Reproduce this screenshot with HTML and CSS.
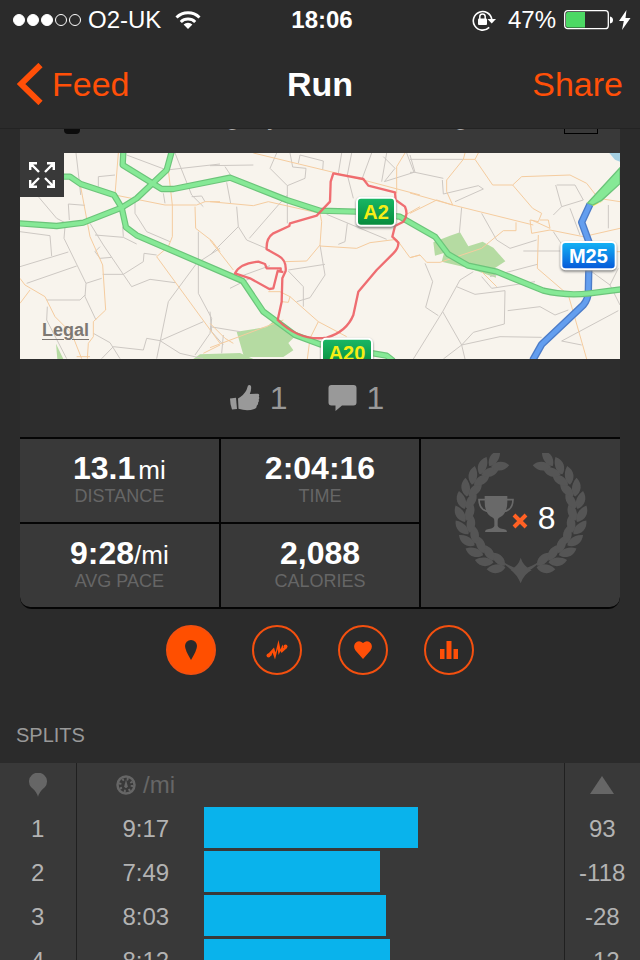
FILE: index.html
```
<!DOCTYPE html>
<html lang="en">
<head>
	<meta charset="UTF-8">
	<meta name="viewport" content="width=device-width, initial-scale=1">
	<title>Run</title>
	<link rel="stylesheet" href="styles.css">
</head>
<body>
<div class="app">
	<header class="top">
		<div class="status">
			<div class="status-left">
				<span class="dots"><i class="on"></i><i class="on"></i><i class="on"></i><i></i><i></i></span>
				<span>O2-UK</span>
				<svg class="wifi" width="26" height="20" viewBox="0 0 26 20" fill="none" stroke="#fff" stroke-width="3">
					<path d="M1.500 7.500a16.500 16.500 0 0 1 23 0"/>
					<path d="M5.800 12a10.400 10.400 0 0 1 14.400 0"/>
					<path d="M13 19l-4.400-4.400a6.300 6.300 0 0 1 8.800 0z" fill="#fff" stroke="none"/>
				</svg>
			</div>
			<b>18:06</b>
			<div class="status-right">
				<svg width="24" height="22" viewBox="0 0 24 22">
					<path d="M17.200 18.400a9.300 9.300 0 1 1 2.600-8" fill="none" stroke="#fff" stroke-width="1.600"/>
					<path d="M15.500 10H24l-4.300 4.600z" fill="#fff"/>
					<rect x="6" y="9.500" width="9" height="6.500" rx="1" fill="#fff"/>
					<path d="M7.800 10V7.600a2.700 2.700 0 0 1 5.400 0V10" fill="none" stroke="#fff" stroke-width="1.500"/>
				</svg>
				<span class="percent">47%</span>
				<svg width="50" height="20" viewBox="0 0 50 20">
					<rect x=".7" y=".7" width="43.600" height="18" rx="3" fill="none" stroke="#fff" stroke-width="1.300"/>
					<path d="M2 4q0-2 2-2h17v15.500H4q-2 0-2-2z" fill="#4cd964"/>
					<path d="M46 6.500q3 .5 3 3.500t-3 3.500z" fill="#fff"/>
				</svg>
				<svg class="bolt" width="12" height="20" viewBox="0 0 12 20"><path d="M7.500 0L0 11h4.800L3 20l8.500-12H6.500z" fill="#fff"/></svg>
			</div>
		</div>
		<nav class="nav">
			<a class="back" href="#">
				<svg width="26" height="42" viewBox="0 0 26 42"><path d="M23.500 2L4 21l19.500 19" fill="none" stroke="#ff4f08" stroke-width="6"/></svg>
				Feed
			</a>
			<h1>Run</h1>
			<button class="share" type="button">Share</button>
		</nav>
	</header>

	<main class="content">
		<article class="card">
			<div class="card-head">
				<span class="avatar"></span>
				<span class="name"><span>g</span><span>y</span></span>
				<span class="place">g</span>
				<span class="badge"></span>
			</div>

			<div class="map">
				<svg class="map-canvas" viewBox="0 0 1800 618" preserveAspectRatio="xMidYMid slice">
					<defs>
						<linearGradient id="green" x1="0" y1="0" x2="0" y2="1"><stop offset="0" stop-color="#19b865"/><stop offset="1" stop-color="#078a3c"/></linearGradient>
						<linearGradient id="blue" x1="0" y1="0" x2="0" y2="1"><stop offset="0" stop-color="#14b4f5"/><stop offset="1" stop-color="#0757d8"/></linearGradient>
					</defs>
					<rect width="1800" height="618" fill="#f8f4ed"/>
					<!-- woods and water -->
					<g fill="#b5dba2">
						<path d="M650 536L740 522 765 500 830 545 805 570 820 592 790 612 672 612z"/>
						<path d="M1240 268L1290 248 1320 238 1345 280 1388 266 1420 284 1456 325 1425 345 1428 374 1345 345 1265 326 1272 300 1245 308z"/>
						<path d="M520 618L540 604 660 600 700 618z"/>
						<path d="M108 572L130 618H112z"/>
					</g>
					<path d="M1768 0H1800V26L1785 20z" fill="#a5d0e2"/>
					<!-- lanes -->
					<g class="lane">
						<g transform="translate(-30 -99)">
							<path d="M198 99L208 185 212 225M350 105L470 150 630 132M495 99L545 225 580 260M265 200V170L315 165M178 300L175 252 225 256M85 230L140 295 165 308M30 335L120 347 125 408M30 440L175 396M50 490L200 438M165 320L162 355 228 490 225 530 258 600M240 310L280 375 365 500 420 478 495 488M255 345L340 352 380 372M270 380L255 395 270 415 305 412M278 463H340L400 425 402 400 440 405M340 350L338 320M375 240V280L410 335 480 365M460 220L465 250M565 335V520L605 595 600 640 555 705M630 385L560 430 475 545 440 716M228 490L275 475M110 540L210 540 225 525M112 560L110 600 170 716M250 640L300 668 330 716M275 716L310 680 400 690 410 655 450 662 580 605M450 662L510 700 580 716M545 230L575 228 585 245"/>
						</g>
						<g transform="translate(570 -24)">
							<path d="M0 62L130 60M45 65L65 95M50 112L62 175M200 24L180 70 232 122 285 100 288 70 248 66 240 24M232 122V235M232 150L205 180 118 280M80 185L85 245 0 330M85 245L110 285 180 315M265 55L270 30 340 48 338 75M395 24L385 85M425 24L412 90 430 160M485 24L455 105M530 24L515 110M520 35L555 70 523 110M590 24L612 82 523 110M350 208L530 283M412 235L405 290 385 298M235 375L345 358M330 300L345 390 300 458 260 470M235 378L280 425V485M75 400L180 362M120 400L60 430M0 500L5 560 40 600M0 545L90 560M40 570L35 625"/>
						</g>
						<g transform="translate(1170 -24)">
							<path d="M0 43H160M0 30L15 82 100 100M15 82H0M97 105L100 147 205 122 220 132 135 170M155 187L148 265M215 205L260 285 300 310 380 285M340 318H450M440 120H495L520 165 455 185 437 120M430 210L455 185M480 190L510 270M595 180V250M430 260L470 320M240 395L382 358M215 395L245 430 375 410M140 425L195 448 285 437 283 537 190 562 155 600 100 642M190 380L150 405 98 500 10 642M45 355L68 410 47 487 85 512M98 500L155 600 165 642M155 600L270 575 395 577M293 497L390 485 435 510 475 495M455 588L625 497M455 588L515 600M545 380L600 420 630 480M600 420L625 370"/>
						</g>
					</g>
					<g class="lane street">
						<g transform="translate(-30 -99)">
							<path d="M325 99L315 225 465 255H560L585 245H630M212 200L240 350 278 435 287 570 250 605V650L235 670 232 716M475 150L487 255V350L475 380 440 410 630 670M555 260L557 325 605 362 630 395M30 475L45 495 105 530 135 590 185 640 215 716M30 550L60 510M200 710H240M630 675L580 700"/>
						</g>
						<g transform="translate(570 -24)">
							<path d="M130 24L370 82 460 105 630 150M0 170L130 182 175 170 330 205 335 230 330 300 290 348 225 350M330 303L440 310 480 293 560 283 600 338 630 330M0 285L70 375M175 440H210L240 455 325 530 410 575M240 455L235 472 215 470M325 530L300 580 292 642M560 145V65L585 24M0 608L220 525M0 535L45 580 70 595M560 225L630 185"/>
						</g>
						<g transform="translate(1170 -24)">
							<path d="M165 24L160 43H195L248 120H308L368 190 395 205 385 230 360 225 365 265 420 255 520 275 630 250M195 43L205 24M160 43L110 105V140L128 180 0 144M128 180L370 240M128 180L80 165 0 205M308 120L335 95 480 90 530 115 565 160 630 170M215 310L280 257H318V232M0 338L30 330 50 352H90L215 310M385 270L382 370 475 450 530 642M450 320H630M215 380L260 425M365 225L420 250 415 225H390"/>
						</g>
					</g>
					<!-- main roads -->
					<path class="road-edge-blue" d="M1710 154L1685 208 1708 270 1705 416Q1704 440 1690 456L1565 574 1538 622"/>
					<path class="road-blue" d="M1710 154L1685 208 1708 270 1705 416Q1704 440 1690 456L1565 574 1538 622"/>
					<path d="M1710 148L1740 150 1752 142 1720 160z" fill="#ffe05a"/>
					<path d="M1703 150L1800 44V92L1745 142 1718 156z" fill="#86e996" stroke="#6cc47a" stroke-width="4"/>
					<g class="road-edge">
						<path d="M310-4L308 36 425 108H460L630 74 800 141 900 173 1010 176 1140 191 1245 251 1285 304 1345 338 1430 356 1570 413Q1640 430 1710 421L1804 409"/>
						<path d="M455-4L440 51 350 136 305 164 190 209 110 219-4 211"/>
						<path d="M100 71H150L182 93 282 126 305 164 318 223 350 247 668 384 730 476 825 546 900 574 1100 608 1120 624"/>
					</g>
					<g class="road">
						<path d="M310-4L308 36 425 108H460L630 74 800 141 900 173 1010 176 1140 191 1245 251 1285 304 1345 338 1430 356 1570 413Q1640 430 1710 421L1804 409"/>
						<path d="M455-4L440 51 350 136 305 164 190 209 110 219-4 211"/>
						<path d="M100 71H150L182 93 282 126 305 164 318 223 350 247 668 384 730 476 825 546 900 574 1100 608 1120 624"/>
					</g>
					<!-- run track -->
					<g class="track" transform="translate(570 -24)">
						<path d="M370 85L460 102 475 122 555 142 557 165 585 185Q596 210 580 230L555 243 547 275 565 293Q566 310 550 325L500 375 445 440 430 510Q410 560 350 578 270 590 203 525L215 470 217 400 227 378Q230 345 205 332L170 313Q168 280 190 265L238 243 240 235 320 212 360 170 362 110z"/>
						<path d="M220 381L203 378 190 430 178 432 120 400 75 385Q90 355 145 350L165 357 170 370H212V381"/>
					</g>
					<g class="shield">
						<rect x="1011" y="134" width="114" height="84" rx="12" fill="url(#green)"/>
						<text x="1068" y="197" fill="#f6ee15">A2</text>
						<rect x="906" y="557" width="150" height="84" rx="12" fill="url(#green)"/>
						<text x="981" y="620" fill="#f6ee15">A20</text>
						<rect x="1624" y="267" width="163" height="82" rx="12" fill="url(#blue)"/>
						<text x="1705" y="329" fill="#fff">M25</text>
					</g>
				</svg>
				<button class="expand" type="button" aria-label="Full screen map">
					<svg width="26" height="26" viewBox="0 0 26 26" fill="none" stroke="#fff" stroke-width="2.400">
						<path d="M1.200 8V1.200H8M1.200 1.200L10 10M18 1.200h6.800V8M24.800 1.200L16 10M1.200 18v6.800H8M1.200 24.800L10 16M18 24.800h6.800V18M24.800 24.800L16 16"/>
					</svg>
				</button>
				<a class="legal" href="#">Legal</a>
			</div>

			<div class="actions">
				<button type="button" aria-label="Likes">
					<svg width="30" height="28" viewBox="0 0 30 28" fill="#999">
						<path d="M0 14.500l6-.8 1 11.300-5 .5Q0 20 0 14.500z"/>
						<path d="M8 14.500q6-3.500 8.500-8.500L18 1.500q2-1.500 3 .8.6 3-1.200 7.700l8.200-.3q2 .8.800 2.800 1 1.500-.1 3 .6 1.800-.6 3 .3 2-1.200 3 0 2.500-2.600 3.500-7 2.500-15.800-.2z"/>
					</svg>
					1
				</button>
				<button type="button" aria-label="Comments">
					<svg width="29" height="26" viewBox="0 0 29 26" fill="#999">
						<path d="M3.500 0h22q3 0 3 3v14.500q0 3-3 3H14L7.500 26V20.500h-4q-3 0-3-3V3q0-3 3-3z"/>
					</svg>
					1
				</button>
			</div>

			<div class="stats">
				<div class="stat"><p class="value">13.1<small class="spaced">mi</small></p><p class="label">DISTANCE</p></div>
				<div class="stat"><p class="value">2:04:16</p><p class="label">TIME</p></div>
				<div class="awards">
					<svg class="laurel" width="136" height="132" viewBox="0 0 408 396" fill="#555">
						<defs>
							<g id="pair">
								<path d="M210 350C200 341 172 346 158 372 182 384 204 372 210 350z"/>
								<path d="M207 345C203 324 182 311 158 320 164 342 186 353 207 345z"/>
							</g>
							<g id="branch">
								<use href="#pair" transform="rotate(18 204 180)"/>
								<use href="#pair" transform="rotate(31 204 180)"/>
								<use href="#pair" transform="rotate(44 204 180)"/>
								<use href="#pair" transform="rotate(57 204 180)"/>
								<use href="#pair" transform="rotate(70 204 180)"/>
								<use href="#pair" transform="rotate(83 204 180)"/>
								<use href="#pair" transform="rotate(96 204 180)"/>
								<use href="#pair" transform="rotate(109 204 180)"/>
								<use href="#pair" transform="rotate(122 204 180)"/>
								<use href="#pair" transform="rotate(135 204 180)"/>
								<use href="#pair" transform="rotate(148 204 180)"/>
								<path d="M204 350Q176 344 148 325 164 352 204 358z"/>
							</g>
						</defs>
						<use href="#branch"/>
						<use href="#branch" transform="matrix(-1 0 0 1 408 0)"/>
						<path d="M203 314Q210 338 236 352 214 362 203 391 192 364 172 350 196 340 203 314z"/>
					</svg>
					<div class="trophies">
						<svg width="36" height="36" viewBox="0 0 108 108">
							<path d="M20 0h68v18q0 38-26 48-3 2-3 10v14q4 8 20 10 8 1 8 8H21q0-7 8-8 16-2 20-10V76q0-8-3-10Q20 56 20 18z" fill="#696969"/>
							<path d="M22 11H3Q4 44 34 47M86 11h19q-1 33-31 36" fill="none" stroke="#696969" stroke-width="5"/>
						</svg>
						<svg class="times" width="16" height="16" viewBox="0 0 16 16"><path d="M2 2l12 12M14 2L2 14" stroke="#ff6124" stroke-width="4"/></svg>
						<span>8</span>
					</div>
				</div>
				<div class="stat"><p class="value">9:28<small>/mi</small></p><p class="label">AVG PACE</p></div>
				<div class="stat"><p class="value">2,088</p><p class="label">CALORIES</p></div>
			</div>
		</article>

		<div class="tabs">
			<button class="tab active" type="button" aria-label="Splits">
				<svg width="12" height="20" viewBox="0 0 12 20"><path d="M6 20Q0 10 0 6a6 6 0 0 1 12 0q0 4-6 14z" fill="#2b2b2b"/></svg>
			</button>
			<button class="tab" type="button" aria-label="Pace">
				<svg width="22" height="20" viewBox="0 0 22 20" fill="#ff4f08">
					<path d="M1.500 14.500L8 7.500l1.500 5L12.500 0l2 9.500 2-5L17.500 8l2.500-1.500 1 1.500-5.500 5-1-2-2 4-.8-6L9 19.500 6.500 12.500 5.500 15.500 2.500 17z"/>
					<circle cx="2.500" cy="15.500" r="2"/><circle cx="19.500" cy="6.500" r="2"/>
				</svg>
			</button>
			<button class="tab" type="button" aria-label="Heart rate">
				<svg width="18" height="18" viewBox="0 0 18 18"><path d="M9 18L1.500 9.500Q-1 6 1 2.500 4.500-1.500 9 2q4.500-3.500 8 .5 2 3.500-.5 7z" fill="#ff4f08"/></svg>
			</button>
			<button class="tab" type="button" aria-label="Analysis">
				<svg width="18" height="18" viewBox="0 0 18 18" fill="#ff4f08"><path d="M0 8h4.500v10H0zM6.500 0h5v18h-5zM13.500 8H18v10h-4.500z"/></svg>
			</button>
		</div>

		<h2 class="section-title">SPLITS</h2>
		<table class="splits">
			<thead>
				<tr>
					<th class="mile" aria-label="Mile"><svg width="18" height="24" viewBox="0 0 18 24"><path d="M9 24Q8 19 2 14a9 8.800 0 1 1 14 0q-6 5-7 10z" fill="#666"/></svg></th>
					<th class="pace">
						<svg width="20" height="20" viewBox="0 0 20 20">
							<circle cx="10" cy="10" r="8.500" fill="none" stroke="#666" stroke-width="2.500"/>
							<circle cx="10" cy="10" r="6" fill="none" stroke="#666" stroke-width="2.500" stroke-dasharray="1.900 2.810"/>
							<path d="M10 4.500l1.800 7q-1.800 3-3.600 0z" fill="#666"/>
						</svg>
						/mi
					</th>
					<th class="graph"></th>
					<th class="climb" aria-label="Elevation"><svg width="24" height="18" viewBox="0 0 24 18"><path d="M12 0l12 18H0z" fill="#666"/></svg></th>
				</tr>
			</thead>
			<tbody>
				<tr><td class="mile">1</td><td class="pace">9:17</td><td class="graph"><div class="bar" style="width: 59.5%"></div></td><td class="climb">93</td></tr>
				<tr><td class="mile">2</td><td class="pace">7:49</td><td class="graph"><div class="bar" style="width: 49%"></div></td><td class="climb">-118</td></tr>
				<tr><td class="mile">3</td><td class="pace">8:03</td><td class="graph"><div class="bar" style="width: 50.5%"></div></td><td class="climb">-28</td></tr>
				<tr><td class="mile">4</td><td class="pace">8:12</td><td class="graph"><div class="bar" style="width: 51.6%"></div></td><td class="climb">-12</td></tr>
			</tbody>
		</table>
	</main>
</div>
</body>
</html>
```

FILE: styles.css
```
* {margin: 0;padding: 0;box-sizing: border-box;}
body {background: #2b2b2b;color: #fff;font-family: "Liberation Sans", Arial, sans-serif;font-size: 24px;}
button {border: none;background: none;color: inherit;font: inherit;cursor: pointer;}
a {color: inherit;text-decoration: none;}
svg {display: block;flex: none;}

.app {display: flex;flex-direction: column;height: 100vh;overflow: hidden;}
.top {position: relative;z-index: 1;flex: none;background: #2b2b2b;border-bottom: 1px solid #232323;}

/* status bar */
.status {display: grid;grid-template-columns: 1fr auto 1fr;align-items: center;height: 40px;padding: 0 9px 0 13px;}
.status-left, .status-right {display: flex;align-items: center;}
.status-right {justify-content: flex-end;}
.dots {display: flex;gap: 2px;margin-right: 7px;}
.dots i {width: 12px;height: 12px;border: 1px solid #fff;border-radius: 50%;}
.dots .on {background: #fff;}
.wifi {margin-left: 14px;}
.percent {margin: 0 8px 0 12px;}
.bolt {margin-left: 5px;}

/* nav bar */
.nav {display: grid;grid-template-columns: 1fr auto 1fr;align-items: center;height: 88px;padding: 0 17px;font-size: 34px;}
.nav h1 {font-size: 34px;}
.back {display: flex;align-items: center;gap: 9px;color: #ff4f08;}
.share {justify-self: end;color: #ff4f08;}

.content {flex: 1;overflow: hidden;}

/* activity card, scrolled part way under the nav bar */
.card {margin: -41px 20px 0;}
.card-head {display: flex;height: 65px;padding: 15px 22px 0 44px;background: #393939;color: #aaa;line-height: 28px;}
.avatar {width: 16px;height: 31px;border-radius: 4px;background: #0c0c0c;}
.name {display: flex;gap: 28px;margin-left: 146px;}
.place {margin-left: 175px;}
.badge {width: 34px;height: 31px;margin-left: auto;border: 1px solid #000;}

.map {position: relative;}
.map-canvas {width: 100%;height: 206px;}
.lane path {fill: none;stroke: #cdc8c3;stroke-width: 3;}
.street path {stroke: #f5cc9f;}
.road-edge, .road, .road-edge-blue, .road-blue, .track {fill: none;stroke-linejoin: round;}
.road-edge {stroke: #6cc47a;stroke-width: 19;}
.road {stroke: #86e996;stroke-width: 12;}
.road-edge-blue {stroke: #4c7cc8;stroke-width: 22;}
.road-blue {stroke: #639eef;stroke-width: 14;}
.track {stroke: #ee5f64;stroke-width: 7;opacity: .9;}
.shield rect {stroke: #fff;stroke-width: 6;filter: drop-shadow(0 4px 3px #777);}
.shield text {font-size: 60px;font-weight: bold;text-anchor: middle;}
.expand {position: absolute;top: 0;left: 0;display: grid;place-items: center;width: 44px;height: 44px;background: #393939;}
.legal {position: absolute;left: 22px;bottom: 18px;color: #7d7873;font-size: 18px;font-weight: bold;text-decoration: underline;text-underline-offset: 3px;}

.actions {display: flex;justify-content: center;align-items: center;gap: 40px;height: 78px;padding-right: 26px;background: #2d2d2d;color: #999;font-size: 32px;}
.actions button {display: flex;align-items: center;gap: 10px;}

.stats {display: grid;grid-template-columns: repeat(3, 1fr);gap: 2px;padding: 2px 0;background: #050505;border-radius: 0 0 12px 12px;overflow: hidden;text-align: center;}
.stat, .awards {background: #393939;}
.stat {padding: 11px 0 16px;}
.stat:nth-child(4) {border-bottom-left-radius: 10px;}
.value {font-size: 32px;font-weight: bold;line-height: 36px;}
.value small {font-size: 26px;font-weight: normal;line-height: 1;}
.value .spaced {margin-left: 3px;}
.label {color: #666;font-size: 18px;line-height: 20px;}
.awards {display: grid;grid-column: 3;grid-row: 1 / 3;border-bottom-right-radius: 10px;}
.laurel, .trophies {grid-area: 1 / 1;justify-self: center;}
.laurel {margin-top: 14px;}
.trophies {display: flex;align-items: center;height: 158px;padding-right: 8px;font-size: 32px;}
.times {margin: 6px 10px 0 -2px;}
.trophies svg:first-child {margin-top: -8px;}

/* chart tabs */
.tabs {display: flex;justify-content: center;gap: 36px;margin-top: 16px;}
.tab {display: grid;place-items: center;width: 50px;height: 50px;border: 2px solid #f4500f;border-radius: 50%;}
.tab.active {background: #ff4f00;}

/* splits */
.section-title {padding: 48px 16px 16px;color: #999;font-size: 20px;font-weight: normal;line-height: 24px;}
.splits {width: 100%;border-collapse: collapse;table-layout: fixed;background: #393939;color: #b3b3b3;}
.splits th {color: #666;font-weight: normal;}
.splits th, .splits td {height: 44px;text-align: center;vertical-align: middle;line-height: 28px;}
.splits th svg {margin: auto;}
.splits .mile {width: 76px;}
.splits .pace {width: 128px;padding-left: 11px;border-left: 1px solid #202020;}
.splits th.pace svg {display: inline-block;vertical-align: -2px;}
.splits .climb {width: 76px;border-left: 1px solid #202020;}
.splits .graph {vertical-align: top;}
.bar {height: 41px;background: #09b3ec;}
```
